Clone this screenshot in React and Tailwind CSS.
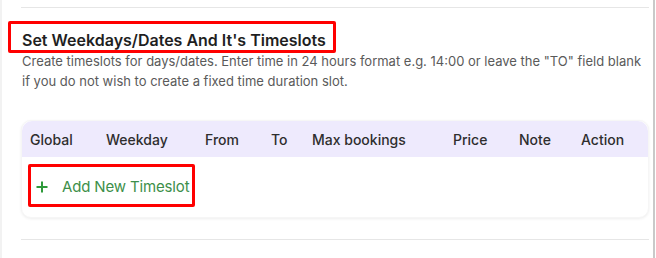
import React from "react";

export default function App() {
  const cols = ["Global", "Weekday", "From", "To", "Max bookings", "Price", "Note", "Action"];
  return (
    <div className="relative w-[656px] h-[258px] bg-white overflow-hidden" style={{ fontFamily: "Inter, 'Noto Sans', sans-serif" }}>
      <div className="absolute left-0 top-0 h-full w-[2px] bg-[#f2f2f2]" />
      <div className="absolute left-[653px] top-0 h-full w-[2px] bg-[#c9c9c9]" />
      <div className="pl-[21px] w-[649px] pt-[7px]">
        <div className="h-px bg-[#e6e6e6]" />
        <div className="mt-[22px] relative">
          <h2 className="text-[16px] leading-[20px] font-semibold text-[#1f1f1f] ml-px">Set Weekdays/Dates And It's Timeslots</h2>
          <div className="absolute left-[-13px] top-[-9px] w-[328px] h-[32px] border-[3px] border-[#ff0000] rounded-[2px]" />
        </div>
        <p className="mt-[1px] text-[13px] leading-[20px] text-[#5a5a5a] ml-px whitespace-nowrap">
          Create timeslots for days/dates. Enter time in 24 hours format e.g. 14:00 or leave the "TO" field blank
          <br />
          if you do not wish to create a fixed time duration slot.
        </p>
        <div className="mt-[29px] rounded-[10px] bg-white shadow-[0_1px_3px_rgba(0,0,0,0.07)] border border-[#f6f6f6]">
          <div className="grid grid-cols-[76px_99px_66px_41px_141px_66px_62px_1fr] h-[36px] items-center bg-[#eeeafd] rounded-t-[10px]">
            {cols.map((c) => (
              <div key={c} className="pl-[8px] text-[14px] font-medium text-[#2e2e2e]">{c}</div>
            ))}
          </div>
          <div className="h-[60px] flex items-center">
            <div className="relative ml-[14px] flex items-center h-[22px]">
              <svg width="12" height="12" viewBox="0 0 12 12" className="mr-[14px]">
                <path d="M6 0.5V11.5M0.5 6H11.5" stroke="#2e9a3a" strokeWidth="2" />
              </svg>
              <span className="text-[15px] text-[#3d8f4a] tracking-[-0.01em]">Add New Timeslot</span>
              <div className="absolute left-[-8px] top-[-12px] w-[167px] h-[43px] border-[3px] border-[#ff0000] rounded-[2px]" />
            </div>
          </div>
        </div>
        <div className="mt-[21px] h-px bg-[#e6e6e6]" />
      </div>
    </div>
  );
}
